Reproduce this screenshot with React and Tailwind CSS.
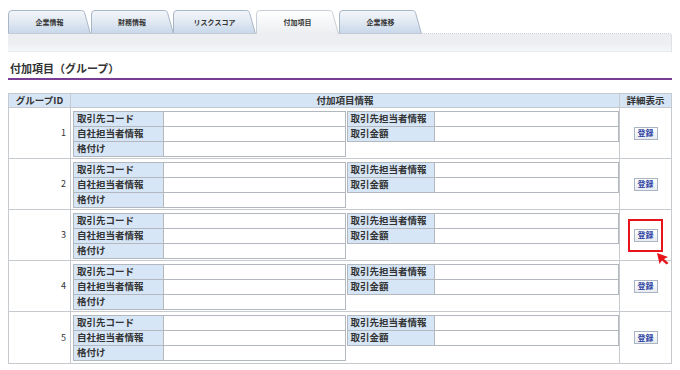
import React from "react";

const tabs = [
  { label: "企業情報", w: "w-[83px]", active: false },
  { label: "財務情報", w: "w-[82px]", active: false },
  { label: "リスクスコア", w: "w-[83px]", active: false },
  { label: "付加項目", w: "w-[83px]", active: true },
  { label: "企業推移", w: "w-[83px]", active: false },
];

function Tab({ label, w, active, idx }) {
  const gid = `tabgrad${idx}`;
  return (
    <div className={`relative ${w} h-[24px] flex items-center justify-center`}>
      <svg className="absolute left-0 top-0" width="83" height="24" viewBox="0 0 83 24">
        <defs>
          <linearGradient id={gid} x1="0" y1="0" x2="0" y2="1">
            {active ? (
              <>
                <stop offset="0" stopColor="#ffffff" />
                <stop offset="1" stopColor="#eceef1" />
              </>
            ) : (
              <>
                <stop offset="0" stopColor="#f3f6fa" />
                <stop offset="0.45" stopColor="#e3eaf3" />
                <stop offset="1" stopColor="#c6d6e9" />
              </>
            )}
          </linearGradient>
        </defs>
        <path
          d="M0.5,24 V4 Q0.5,0.5 4,0.5 H73.5 Q75.5,0.5 76.5,2.5 L82.5,24"
          fill={`url(#${gid})`}
          stroke={active ? "#c9cfd6" : "#a9b6c6"}
          strokeWidth="1"
        />
        {!active && <line x1="0" y1="23.5" x2="83" y2="23.5" stroke="#c3cad3" strokeWidth="1" />}
      </svg>
      <span className="relative pt-[1px] text-[7px] font-bold text-[#333] leading-none">{label}</span>
    </div>
  );
}

function LabelRow({ label, labelW }) {
  return (
    <div className="flex h-[15px] border-b border-[#b3b8be]">
      <div className={`${labelW} shrink-0 bg-[#d7e6f6] border-r border-[#b3b8be] pl-[3px] flex items-center text-[9.5px] font-bold text-[#333] leading-none`}>
        {label}
      </div>
      <div className="flex-1 bg-white" />
    </div>
  );
}

function Button() {
  return (
    <div className="w-[24px] h-[13px] border border-[#aab4c2] bg-linear-to-b from-white to-[#e8ecf1] flex items-center justify-center text-[8px] font-bold text-[#2d43a2] leading-none">
      登録
    </div>
  );
}

function GroupRow({ id, last, highlight }) {
  return (
    <div className={`flex h-[51px] ${last ? "" : "border-b border-[#c6cace]"}`}>
      <div className="w-[62px] shrink-0 border-r border-[#c6cace] flex items-center justify-end pr-[4px] text-[9px] text-[#333]">
        {id}
      </div>
      <div className="w-[549px] shrink-0 border-r border-[#c6cace] pl-[2px] pt-[3px] flex items-start gap-[1px]">
        <div className="w-[273px] border-x border-t border-[#b3b8be]">
          <LabelRow label="取引先コード" labelW="w-[90px]" />
          <LabelRow label="自社担当者情報" labelW="w-[90px]" />
          <LabelRow label="格付け" labelW="w-[90px]" />
        </div>
        <div className="w-[273px] border-x border-t border-[#b3b8be]">
          <LabelRow label="取引先担当者情報" labelW="w-[87px]" />
          <LabelRow label="取引金額" labelW="w-[87px]" />
        </div>
      </div>
      <div className="flex-1 flex items-center justify-center">
        {highlight ? (
          <div className="relative w-[35px] h-[33px] border-2 border-[#e8141b] flex items-center justify-center">
            <Button />
            <svg className="absolute left-[26px] top-[31px]" width="13" height="13" viewBox="0 0 13 13">
              <polygon points="1,1 12,5 8,7 12.5,11 10.5,12.5 6,8.5 3.5,12" fill="#e8141b" />
            </svg>
          </div>
        ) : (
          <Button />
        )}
      </div>
    </div>
  );
}

export default function App() {
  return (
    <div className="w-[680px] h-[370px] overflow-hidden bg-white font-['Noto_Sans_CJK_JP','Noto_Sans',sans-serif] text-[#333]">
      <div className="pt-[10px] pl-[8px] w-[672px]">
        <div className="relative z-10 flex -mb-[1px]">
          {tabs.map((t, i) => (
            <Tab key={t.label} idx={i} {...t} />
          ))}
        </div>
        <div className="h-[19px] w-[664px] rounded-tr-[3px] border-t border-r border-[#cfd4da] bg-linear-to-b from-[#eceef1] via-[#eceef1] to-[#f5f6f8] border-b border-b-[#e6e7e9] border-dotted" />
        <div className="pt-[9px] pl-[2px] h-[24px] text-[11px] font-bold leading-[14px] text-[#333]">
          付加項目（グループ）
        </div>
        <div className="mt-[2px] w-[664px] h-[2px] bg-[#7a3c92]" />
        <div className="mt-[13px] w-[664px] border border-[#c6cace]">
          <div className="flex h-[14px] bg-[#d6e5f5] border-b border-[#c6cace] text-[9.5px] font-bold text-[#333] leading-none">
            <div className="w-[62px] shrink-0 border-r border-[#c6cace] flex items-center justify-center">グループID</div>
            <div className="w-[549px] shrink-0 border-r border-[#c6cace] flex items-center justify-center">付加項目情報</div>
            <div className="flex-1 flex items-center justify-center">詳細表示</div>
          </div>
          {[1, 2, 3, 4, 5].map((n) => (
            <GroupRow key={n} id={n} last={n === 5} highlight={n === 3} />
          ))}
        </div>
      </div>
    </div>
  );
}
